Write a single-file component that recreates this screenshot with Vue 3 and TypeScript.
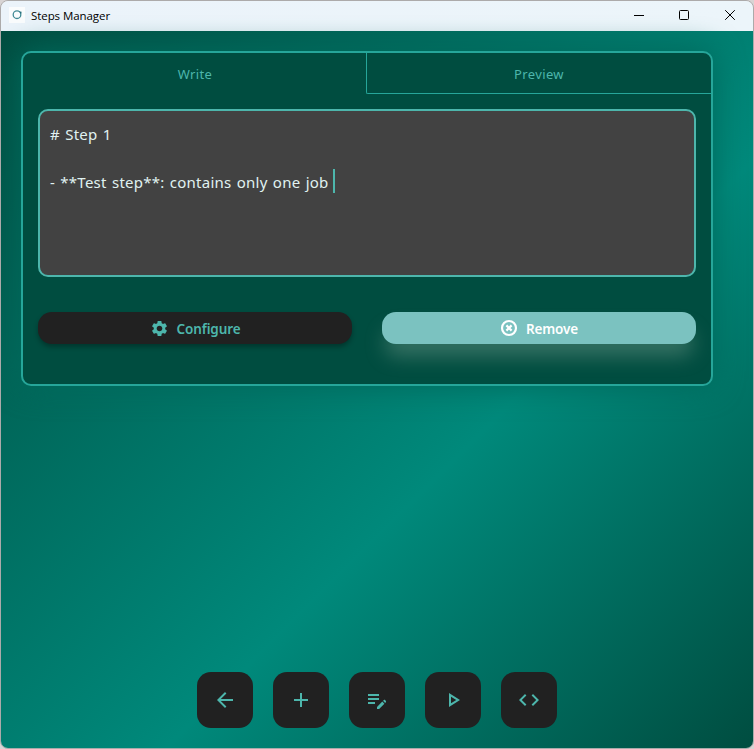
<script setup lang="ts">
import { ref } from 'vue'

type Tab = 'Write' | 'Preview'
const tabs: Tab[] = ['Write', 'Preview']
const active = ref<Tab>('Write')
const lines: string[] = ['# Step 1', '', '- **Test step**: contains only one job ']

interface Action { label: string; path: string }
const actions: Action[] = [
  { label: 'Back', path: 'M20 11H7.83l5.59-5.59L12 4l-8 8 8 8 1.41-1.41L7.83 13H20v-2z' },
  { label: 'Add', path: 'M19 13h-6v6h-2v-6H5v-2h6V5h2v6h6v2z' },
  { label: 'Edit', path: 'M3 10h11v2H3v-2zm0-2h11V6H3v2zm0 8h7v-2H3v2zm15.01-3.13.71-.71c.39-.39 1.02-.39 1.41 0l.71.71c.39.39.39 1.02 0 1.41l-.71.71-2.12-2.12zm-.71.71-5.3 5.3V21h2.12l5.3-5.3-2.12-2.12z' },
  { label: 'Run', path: 'M10 8.64 15.27 12 10 15.36V8.64M8 5v14l11-7L8 5z' },
  { label: 'Code', path: 'M9.4 16.6 4.8 12l4.6-4.6L8 6l-6 6 6 6 1.4-1.4zm5.2 0 4.6-4.6-4.6-4.6L16 6l6 6-6 6-1.4-1.4z' },
]
</script>

<template>
  <div class="window">
    <header class="titlebar">
      <span class="app-icon">
        <svg width="16" height="16" viewBox="0 0 16 16">
          <circle cx="8" cy="7.7" r="3.8" fill="none" stroke="#438b96" stroke-width="1.3" />
          <path d="M10 4.5l2.6.2-.4 2.2z" fill="#216c79" />
        </svg>
      </span>
      <span class="title">Steps Manager</span>
      <div class="controls">
        <svg viewBox="0 0 12 12"><path d="M2 6.5h10" /></svg>
        <svg viewBox="0 0 12 12"><rect x="1.5" y="1.5" width="9" height="9" rx="1" /></svg>
        <svg viewBox="0 0 12 12"><path d="M1.2 1.2l9.6 9.6M10.8 1.2l-9.6 9.6" /></svg>
      </div>
    </header>

    <main class="content">
      <section class="card">
        <nav class="tabs">
          <button v-for="t in tabs" :key="t" class="tab" :class="{ active: t === active }" @click="active = t">{{ t }}</button>
        </nav>
        <div class="body">
          <div class="editor">
            <div v-for="(line, i) in lines" :key="i" class="line"><span>{{ line }}</span><span v-if="i === lines.length - 1" class="caret"></span></div>
          </div>
          <div class="buttons">
            <button class="btn dark">
              <svg width="19" height="19" viewBox="0 0 24 24"><path d="M19.14 12.94c.04-.3.06-.61.06-.94 0-.32-.02-.64-.07-.94l2.03-1.58c.18-.14.23-.41.12-.61l-1.92-3.32c-.12-.22-.37-.29-.59-.22l-2.39.96c-.5-.38-1.03-.7-1.62-.94l-.36-2.54c-.04-.24-.24-.41-.48-.41h-3.84c-.24 0-.43.17-.47.41l-.36 2.54c-.59.24-1.13.57-1.62.94l-2.39-.96c-.22-.08-.47 0-.59.22L2.74 8.87c-.12.21-.08.47.12.61l2.03 1.58c-.05.3-.09.63-.09.94s.02.64.07.94l-2.03 1.58c-.18.14-.23.41-.12.61l1.92 3.32c.12.22.37.29.59.22l2.39-.96c.5.38 1.03.7 1.62.94l.36 2.54c.05.24.24.41.48.41h3.84c.24 0 .44-.17.47-.41l.36-2.54c.59-.24 1.13-.56 1.62-.94l2.39.96c.22.08.47 0 .59-.22l1.92-3.32c.12-.22.07-.47-.12-.61l-2.01-1.58zM12 15.6c-1.98 0-3.6-1.62-3.6-3.6s1.62-3.6 3.6-3.6 3.6 1.62 3.6 3.6-1.62 3.6-3.6 3.6z" /></svg>
              <span>Configure</span>
            </button>
            <button class="btn light">
              <svg width="18" height="18" viewBox="0 0 18 18" class="cross"><circle cx="9" cy="9" r="7" /><path d="M6.4 6.4l5.2 5.2M11.6 6.4l-5.2 5.2" /></svg>
              <span>Remove</span>
            </button>
          </div>
        </div>
      </section>

      <footer class="dock">
        <button v-for="a in actions" :key="a.label" class="dock-btn" :aria-label="a.label">
          <svg width="24" height="24" viewBox="0 0 24 24"><path :d="a.path" /></svg>
        </button>
      </footer>
    </main>
  </div>
</template>

<style>
body { margin: 0; background: #d8d4d4; }
</style>

<style scoped>
* { box-sizing: border-box; }
button { margin: 0; padding: 0; border: 0; background: none; font: inherit; color: inherit; }
.window {
  width: 754px; height: 749px; border: 1px solid #acaaaa; border-radius: 8px; overflow: hidden;
  display: flex; flex-direction: column; font-family: "Noto Sans", "Open Sans", sans-serif;
}
.titlebar { height: 30px; flex: none; display: flex; align-items: center; padding: 0 0 2px 8px; background: linear-gradient(90deg, #ebf3fa, #ecf5fa); }
.app-icon { width: 16px; height: 16px; background: #fafcfd; display: flex; }
.title { margin: 2px 0 0 6px; font: 11.5px/16px "Open Sans", sans-serif; letter-spacing: -0.07px; color: #000; }
.controls { margin-left: auto; display: flex; gap: 34px; padding-right: 17px; }
.controls svg { width: 12px; height: 12px; fill: none; stroke: #000; stroke-width: 1; }
.content {
  flex: 1; display: flex; flex-direction: column; justify-content: space-between; align-items: flex-start;
  padding: 20px; background: linear-gradient(135deg, #004d40, #00897b 60%, #004d40);
}
.card { width: 692px; height: 335px; border: 2px solid #26a69a; border-radius: 10px; background: #004d40; box-shadow: 0 0 30px #00695c; }
.tabs { display: flex; height: 41px; }
.tab { width: 344px; padding-top: 2px; font-size: 13px; letter-spacing: 0.38px; color: #4db6ac; border-bottom: 1px solid #26a69a; border-left: 1px solid #26a69a; border-bottom-left-radius: 2px; }
.tab.active { width: 343px; border-color: transparent; }
.tab:last-child { flex: 1; }
.body { padding: 15px 15px 0; }
.editor { height: 168px; border: 2px solid #4db6ac; border-radius: 10px; background: #424242; padding: 11px 10px; color: #e0f2f1; font-size: 15px; letter-spacing: 0.25px; word-spacing: 1.1px; }
.line { height: 24px; line-height: 24px; white-space: pre; display: flex; }
.caret { width: 2px; height: 24px; background: #4db6ac; margin: -1px 0 0 -1px; }
.buttons { display: flex; gap: 30px; margin-top: 35px; }
.btn { flex: 1; height: 32px; border-radius: 14px; display: flex; align-items: center; justify-content: center; gap: 8px; font-size: 13.5px; font-weight: 600; letter-spacing: -0.12px; }
.btn span { padding-top: 1px; }
.dark { background: #212121; color: #4db6ac; box-shadow: 0 3px 5px rgba(0, 0, 0, 0.3); }
.dark svg { fill: #4db6ac; }
.light { background: #7bc2c0; color: #fff; box-shadow: 0 15px 20px -3px rgba(123, 160, 145, 0.45); }
.cross { fill: none; stroke: #fff; stroke-width: 2.2; }
.dock { align-self: center; display: flex; gap: 20px; }
.dock-btn { width: 56px; height: 56px; border-radius: 14px; background: #212121; display: flex; align-items: center; justify-content: center; }
.dock-btn svg { fill: #4db6ac; }
</style>
